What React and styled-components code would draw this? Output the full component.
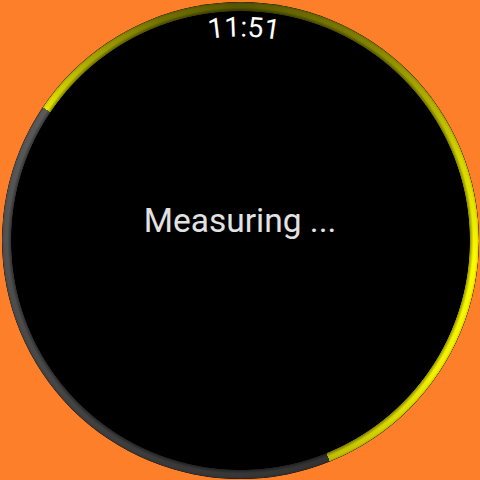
import React from 'react'
import styled, { createGlobalStyle } from 'styled-components'

const GlobalStyle = createGlobalStyle`
  html, body {
    margin: 0;
    padding: 0;
    background: #fe7f2a;
  }
  #root {
    width: 480px;
    height: 480px;
  }
`

const Screen = styled.div`
  width: 480px;
  height: 480px;
  display: flex;
  align-items: center;
  justify-content: center;
  background: #fe7f2a;
  font-family: Roboto, "Noto Sans", sans-serif;
`

const Face = styled.div`
  position: relative;
  width: 477px;
  height: 477px;
  border-radius: 50%;
  background: #000;
  display: flex;
  align-items: center;
  justify-content: center;
  overflow: hidden;
`

const Ring = styled.div`
  position: absolute;
  inset: 0;
  border-radius: 50%;
  background:
    radial-gradient(circle closest-side, rgba(0,0,0,0.45) 229px, rgba(0,0,0,0) 233px, rgba(0,0,0,0) 236px, rgba(0,0,0,0.18) 238.5px),
    conic-gradient(
      from 0deg,
      #545402 0deg,
      #858500 35deg,
      #d6d600 70deg,
      #fbfb00 95deg,
      #f0f000 125deg,
      #bdbd00 158deg,
      #333333 158deg,
      #3a3a3a 200deg,
      #4c4c4c 250deg,
      #5a5a5a 304deg,
      #e6e600 304deg,
      #a8a800 320deg,
      #727200 340deg,
      #545402 360deg
    );
  -webkit-mask: radial-gradient(circle closest-side, transparent 229px, #000 229.6px);
  mask: radial-gradient(circle closest-side, transparent 229px, #000 229.6px);
`

const Clock = styled.svg`
  position: absolute;
  inset: 0;
  width: 100%;
  height: 100%;
  pointer-events: none;

  text {
    font-family: Roboto, "Noto Sans", sans-serif;
    font-size: 28px;
    fill: #ffffff;
  }
`

const Status = styled.p`
  margin: 0 0 40px 0;
  color: #e2e2e2;
  font-size: 33.5px;
  font-weight: 400;
`

export default function App() {
  return (
    <>
      <GlobalStyle />
      <Screen>
        <Face>
          <Ring />
          <Clock viewBox="0 0 477 477">
            <defs>
              <path id="timeArc" d="M 34.5 238.5 A 204 204 0 0 1 442.5 238.5" />
            </defs>
            <text>
              <textPath href="#timeArc" startOffset="50.5%" textAnchor="middle">
                11:51
              </textPath>
            </text>
          </Clock>
          <Status>Measuring ...</Status>
        </Face>
      </Screen>
    </>
  )
}
